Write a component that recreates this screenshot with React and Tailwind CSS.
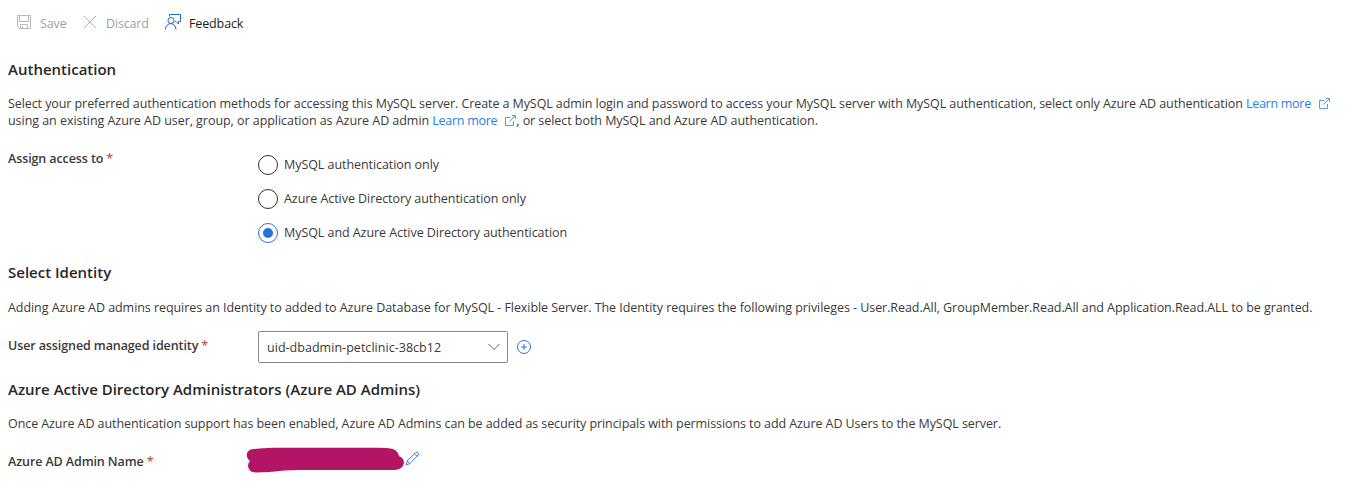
const Heading = ({ children }) => (
  <h2 className="h-5 whitespace-nowrap text-[15px] font-semibold leading-[18px] text-[#292827]">{children}</h2>
);

const Label = ({ children }) => (
  <div className="w-[250px] shrink-0 whitespace-nowrap text-[12.5px] font-semibold leading-[18px] tracking-[-0.1px] text-[#3b3a39]">
    {children}<span className="ml-[3px] font-normal text-[#c0392f]">*</span>
  </div>
);

const LearnMore = () => (
  <a className="text-[#2b7de9]">
    <span className="tracking-[-0.28px]">Learn more</span>
    <svg className="ml-[8px] inline-block align-[-1px]" width="11" height="11" viewBox="0 0 11 11" fill="none" stroke="#5b9aea">
      <path d="M5.5 2.5h-5v8h8V6M7 .5h3.5V4M10.3.7 4.5 6.5" />
    </svg>
  </a>
);

const Radio = ({ children, checked }) => (
  <div className="flex h-5 items-center gap-[6px]">
    <span className={`flex h-5 w-5 items-center justify-center rounded-full border ${checked ? "border-[#2674d9]" : "border-[#323130]"}`}>
      {checked && <span className="h-[10px] w-[10px] rounded-full bg-[#2674d9]" />}
    </span>
    <span className="-mt-[2px] whitespace-nowrap tracking-[-0.06px]">{children}</span>
  </div>
);

export default function App() {
  return (
    <main className="h-[484px] w-[1349px] overflow-hidden bg-white pl-2 font-['Open_Sans','Noto_Sans',sans-serif] text-[12.5px] leading-[17px] text-[#3b3a39]">
      <div className="flex h-[46px] items-center pl-2 text-[#a19f9d]">
        <svg className="-mt-[2px]" width="16" height="16" viewBox="0 0 16 16" fill="none" stroke="#bab8b6">
          <path d="M1.5 1.5h13v13h-11l-2-2zM3.5 1.5v6h9v-6M4.5 14.5v-4h7v4M6.5 12v2.5" />
        </svg>
        <span className="ml-2 w-[27px] whitespace-nowrap tracking-[-0.1px]">Save</span>
        <svg className="-mt-[2px] ml-[15px]" width="16" height="16" viewBox="0 0 16 16" fill="none" stroke="#b5b3b1">
          <path d="m2 2 12 12M14 2 2 14" />
        </svg>
        <span className="ml-2 w-[42px] whitespace-nowrap tracking-[-0.15px]">Discard</span>
        <svg className="-mt-[2px] ml-4" width="18" height="18" viewBox="0 0 18 18" fill="none" stroke="#2468c8">
          <path d="M5.5 3.5V1.5h11v7h-2v2.5L12 8.5h-1" />
          <circle cx="7" cy="7.5" r="3" />
          <path d="M1.5 16.5c0-7.8 10.5-7.8 10.5 0" />
        </svg>
        <span className="ml-[7px] whitespace-nowrap tracking-[-0.13px] text-[#201f1e]">Feedback</span>
      </div>

      <div className="mt-[14px]"><Heading>Authentication</Heading></div>
      <p className="mt-[15px] whitespace-nowrap tracking-[-0.083px]">
        Select your preferred authentication methods for accessing this MySQL server. Create a MySQL admin login and password to access your MySQL server with MySQL authentication, select only Azure AD authentication <LearnMore />
        <br />
        <span className="tracking-[-0.045px]">using an existing Azure AD user, group, or application as Azure AD admin </span><LearnMore /><span className="tracking-[-0.05px]">, or select both MySQL and Azure AD authentication.</span>
      </p>

      <div className="mt-5 flex h-[94px]">
        <div className="mt-px"><Label>Assign access to</Label></div>
        <div className="mt-[6px] flex flex-col gap-[14px]">
          <Radio>MySQL authentication only</Radio>
          <Radio>Azure Active Directory authentication only</Radio>
          <Radio checked>MySQL and Azure Active Directory authentication</Radio>
        </div>
      </div>

      <div className="mt-5"><Heading>Select Identity</Heading></div>
      <p className="mt-4 whitespace-nowrap tracking-[-0.059px]">
        Adding Azure AD admins requires an Identity to added to Azure Database for MySQL - Flexible Server. The Identity requires the following privileges - User.Read.All, GroupMember.Read.All and Application.Read.ALL to be granted.
      </p>
      <div className="mt-[15px] flex h-8 items-center">
        <div className="-mt-[2px]"><Label>User assigned managed identity</Label></div>
        <div className="flex h-8 w-[250px] items-center justify-between rounded-[2px] border border-[#8a8886] pl-2 pr-[7px]">
          <span className="whitespace-nowrap tracking-[0.03px]">uid-dbadmin-petclinic-38cb12</span>
          <svg width="12" height="8" viewBox="0 0 12 8" fill="none" stroke="#605e5c"><path d="m.5 1 5.5 5.5L11.5 1" /></svg>
        </div>
        <svg className="ml-2" width="16" height="16" viewBox="0 0 16 16" fill="none" stroke="#2674d9">
          <circle cx="8" cy="8" r="6.5" /><path d="M8 5v6M5 8h6" />
        </svg>
      </div>

      <div className="mt-[17px]"><Heading>Azure Active Directory Administrators (Azure AD Admins)</Heading></div>
      <p className="mt-[15px] whitespace-nowrap tracking-[-0.079px]">
        Once Azure AD authentication support has been enabled, Azure AD Admins can be added as security principals with permissions to add Azure AD Users to the MySQL server.
      </p>
      <div className="mt-[15px] flex h-7">
        <div className="mt-[6px] w-[238px]"><Label>Azure AD Admin Name</Label></div>
        <svg width="158" height="26" viewBox="0 0 158 26" fill="#b31564">
          <path d="M8 2Q16 1 27 .7H132Q142 .7 147 2Q152 4 153 9Q158 11 158 16Q157 22 149 23H52Q38 23 24 25L10 25.500Q2 25 2 18.500Q2 16 4 14Q0 11 1 6Q3 2 8 2Z" />
        </svg>
        <svg className="ml-[1px] mt-[4px]" width="15" height="15" viewBox="0 0 15 15" fill="none" stroke="#3a7fd8">
          <path d="m1 14 1.2-4L10.8 1.4Q12 .5 13 1.6T13.2 4L4.8 12.6zM2.2 10l2.6 2.6M9.5 2.8l2.7 2.7" />
        </svg>
      </div>
    </main>
  );
}
